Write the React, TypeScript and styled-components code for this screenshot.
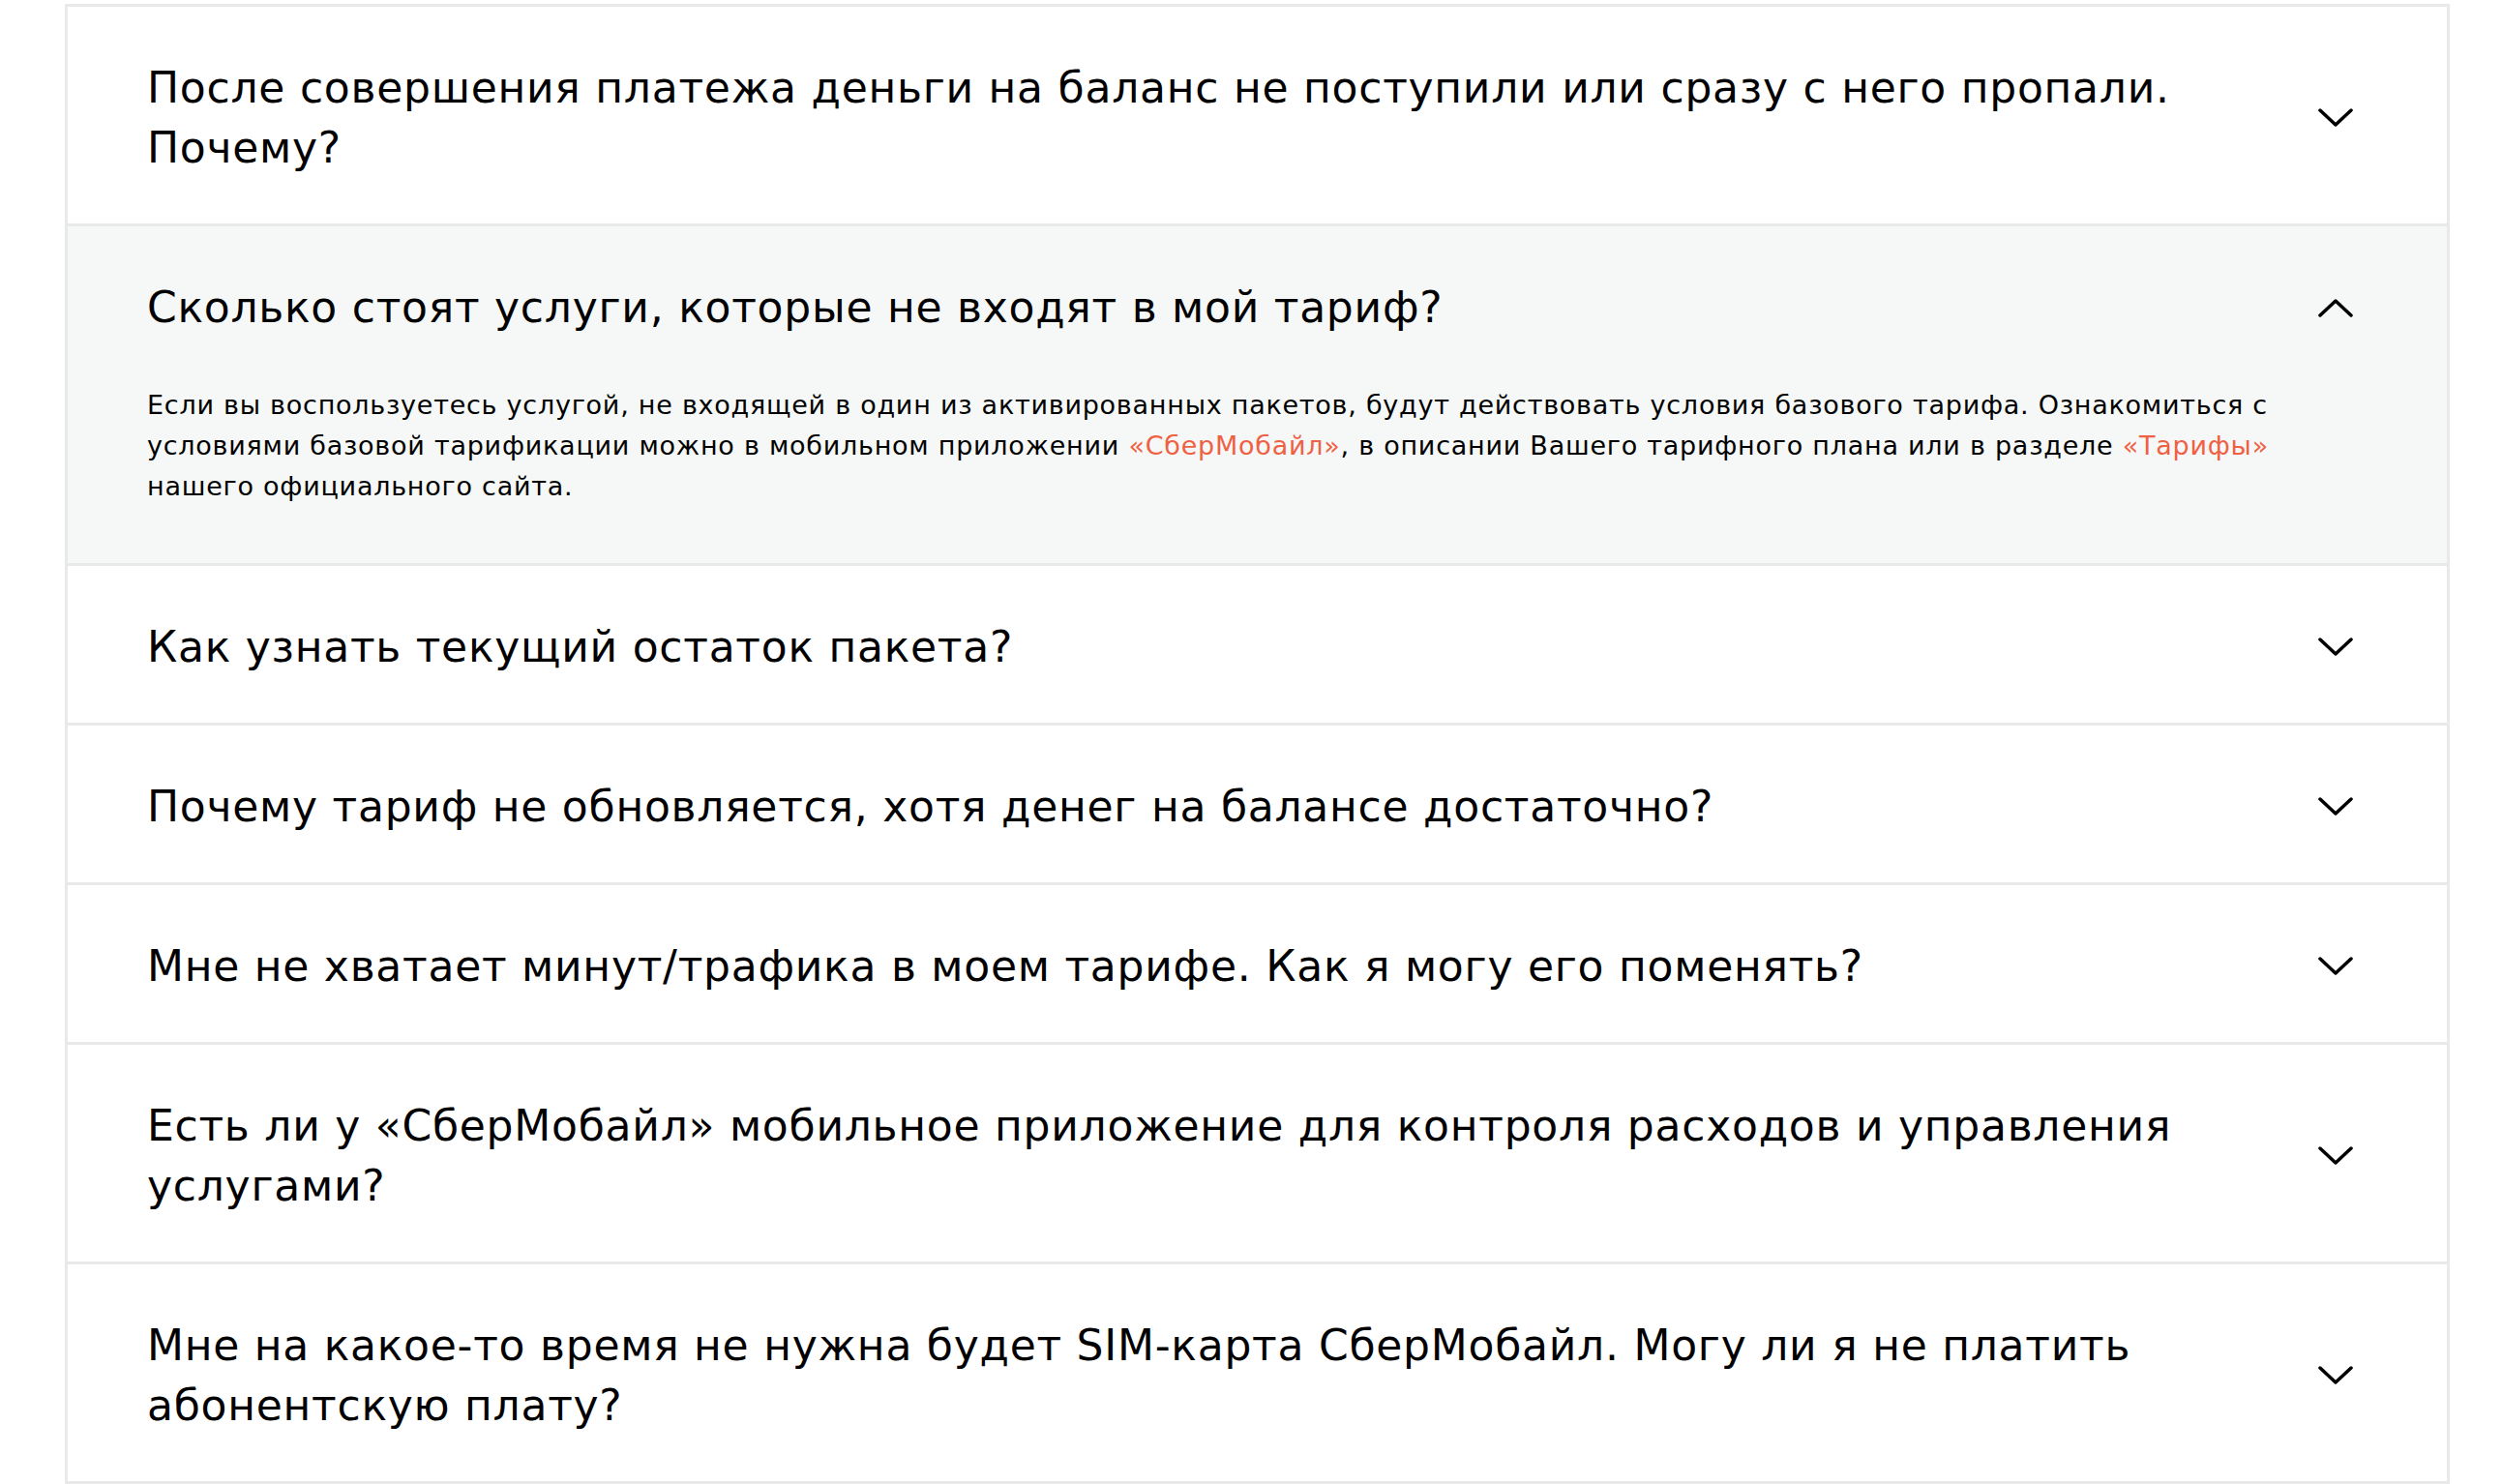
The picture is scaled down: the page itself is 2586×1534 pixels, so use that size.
import React from 'react';
import styled, { createGlobalStyle } from 'styled-components';

type FaqItem = {
    question: string;
    answer?: React.ReactNode;
}

const GlobalStyle = createGlobalStyle`
    body {
        margin: 0;
        background: #ffffff;
        font-family: "DejaVu Sans", "Noto Sans", sans-serif;
        color: #000000;
    }
`

const Page = styled.div`
    padding: 4px 54px 0 67px;
`

const List = styled.div`
    border-left: 3px solid #e9e9e9;
    border-right: 3px solid #e9e9e9;
    border-bottom: 3px solid #e9e9e9;
`

const Row = styled.div<{ open: boolean }>`
    border-top: 3px solid #e9e9e9;
    background: ${(props) => props.open ? '#f6f8f7' : '#ffffff'};
    padding-bottom: ${(props) => props.open ? '58px' : '0'};
`

const Header = styled.div`
    display: flex;
    align-items: center;
    padding: 53px 97px 47px 82px;
    gap: 40px;
`

const Question = styled.h3`
    flex: 1;
    margin: 0;
    font-size: 44px;
    font-weight: normal;
    line-height: 62px;
    letter-spacing: 0.75px;
`

const Answer = styled.p`
    margin: 0;
    padding: 2px 130px 0 82px;
    font-size: 27px;
    line-height: 42px;
    letter-spacing: 0.75px;

    & a {
        color: #ee6144;
        text-decoration: none;
    }
`

const Chevron = styled.svg<{ up: boolean }>`
    flex-shrink: 0;
    width: 36px;
    height: 20px;
    transform: ${(props) => props.up ? 'rotate(180deg)' : 'none'};
`

const items: FaqItem[] = [
    { question: 'После совершения платежа деньги на баланс не поступили или сразу с него пропали. Почему?' },
    {
        question: 'Сколько стоят услуги, которые не входят в мой тариф?',
        answer: (
            <>
                Если вы воспользуетесь услугой, не входящей в один из активированных пакетов, будут действовать условия базового тарифа. Ознакомиться с условиями базовой тарификации можно в мобильном приложении <a href="#">«СберМобайл»</a>, в описании Вашего тарифного плана или в разделе <a href="#">«Тарифы»</a> нашего официального сайта.
            </>
        ),
    },
    { question: 'Как узнать текущий остаток пакета?' },
    { question: 'Почему тариф не обновляется, хотя денег на балансе достаточно?' },
    { question: 'Мне не хватает минут/трафика в моем тарифе. Как я могу его поменять?' },
    { question: 'Есть ли у «СберМобайл» мобильное приложение для контроля расходов и управления услугами?' },
    { question: 'Мне на какое-то время не нужна будет SIM-карта СберМобайл. Могу ли я не платить абонентскую плату?' },
]

const App: React.FC = () => {
    return (
        <Page>
            <GlobalStyle />
            <List>
                {items.map((item) => {
                    const open = !!item.answer;
                    return (
                        <Row key={item.question} open={open}>
                            <Header>
                                <Question>{item.question}</Question>
                                <Chevron up={open} viewBox="0 0 36 20">
                                    <polyline points="2,2 18,17 34,2" fill="none" stroke="#000" strokeWidth="3.5" strokeLinecap="round" strokeLinejoin="round" />
                                </Chevron>
                            </Header>
                            {open && <Answer>{item.answer}</Answer>}
                        </Row>
                    )
                })}
            </List>
        </Page>
    )
}

export default App;
